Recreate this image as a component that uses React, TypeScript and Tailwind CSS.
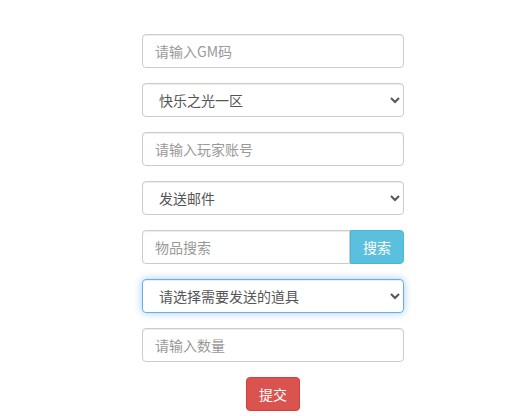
import React from 'react';

const font = { fontFamily: '"Noto Sans CJK SC", "Noto Sans", sans-serif' };

const inputCls =
    'block w-full h-[34px] px-3 text-[14px] text-[#555] bg-white border border-[#ccc] rounded-[4px] shadow-[inset_0_1px_1px_rgba(0,0,0,0.075)] placeholder:text-[#999] outline-none';

export default function App() {
    return (
        <div className="min-h-[416px] bg-white" style={font}>
            <form className="ml-[142px] w-[262px] pt-[34px] flex flex-col gap-[15px]">
                <input className={inputCls} placeholder="请输入GM码" />

                <select className={inputCls} defaultValue="1">
                    <option value="1">快乐之光一区</option>
                </select>

                <input className={inputCls} placeholder="请输入玩家账号" />

                <select className={inputCls} defaultValue="mail">
                    <option value="mail">发送邮件</option>
                </select>

                {/* Item search group */}
                <div className="flex h-[34px]">
                    <input
                        className="flex-1 min-w-0 h-[34px] px-3 text-[14px] text-[#555] bg-white border border-[#ccc] rounded-l-[4px] shadow-[inset_0_1px_1px_rgba(0,0,0,0.075)] placeholder:text-[#999] outline-none"
                        placeholder="物品搜索"
                    />
                    <button
                        type="button"
                        className="w-[54px] h-[34px] text-[14px] text-white bg-[#5bc0de] border border-[#46b8da] rounded-r-[4px]"
                    >
                        搜索
                    </button>
                </div>

                {/* Focused select */}
                <select
                    className="block w-full h-[34px] px-3 text-[14px] text-[#555] bg-white border border-[#66afe9] rounded-[4px] shadow-[inset_0_1px_1px_rgba(0,0,0,0.075),0_0_8px_rgba(102,175,233,0.6)] outline-none"
                    defaultValue="0"
                >
                    <option value="0">请选择需要发送的道具</option>
                </select>

                <input className={inputCls} placeholder="请输入数量" />

                <div className="flex justify-center">
                    <button
                        type="button"
                        className="w-[54px] h-[34px] text-[14px] text-white bg-[#d9534f] border border-[#d43f3a] rounded-[4px]"
                    >
                        提交
                    </button>
                </div>
            </form>
        </div>
    );
}
